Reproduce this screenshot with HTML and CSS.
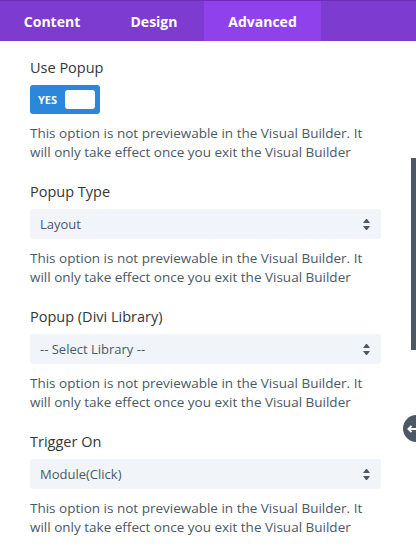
FILE: index.html
```html
<!DOCTYPE html>
<html lang="en">
<head>
    <meta charset="UTF-8">
    <title>Module Settings</title>
    <link rel="stylesheet" href="styles.css">
</head>
<body>
    <div class="tabs">
        <div class="tab">Content</div>
        <div class="tab">Design</div>
        <div class="tab active">Advanced</div>
    </div>

    <div class="panel">
        <div class="option">
            <div class="label">Use Popup</div>
            <div class="toggle">
                <span class="toggle-text">YES</span>
                <span class="knob"></span>
            </div>
            <p class="help">This option is not previewable in the Visual Builder. It will only take effect once you exit the Visual Builder</p>
        </div>

        <div class="option">
            <div class="label">Popup Type</div>
            <div class="select">
                <span>Layout</span>
                <span class="arrows"></span>
            </div>
            <p class="help">This option is not previewable in the Visual Builder. It will only take effect once you exit the Visual Builder</p>
        </div>

        <div class="option">
            <div class="label">Popup (Divi Library)</div>
            <div class="select">
                <span>-- Select Library --</span>
                <span class="arrows"></span>
            </div>
            <p class="help">This option is not previewable in the Visual Builder. It will only take effect once you exit the Visual Builder</p>
        </div>

        <div class="option">
            <div class="label">Trigger On</div>
            <div class="select">
                <span>Module(Click)</span>
                <span class="arrows"></span>
            </div>
            <p class="help">This option is not previewable in the Visual Builder. It will only take effect once you exit the Visual Builder</p>
        </div>
    </div>

    <div class="scrollbar"></div>
    <div class="collapse">
        <svg width="10" height="10" viewBox="0 0 10 10"><path d="M9 5H2M4.5 2L1.5 5l3 3" fill="none" stroke="#fff" stroke-width="2"/></svg>
    </div>
</body>
</html>
```

FILE: styles.css
```css
body {
    margin: 0;
    font-family: "Open Sans", sans-serif;
    background-color: #fff;
    overflow: hidden;
    height: 547px;
    position: relative;
}

.tabs {
    display: flex;
    height: 41px;
    background-color: #7e3bd0;
    border-top: 1px solid #6c2eb9;
    box-sizing: border-box;
}

.tab {
    display: flex;
    align-items: center;
    justify-content: center;
    color: #fff;
    font-weight: 700;
    font-size: 14px;
    padding: 0 26px;
}

.tab:first-child {
    width: 52px;
}

.tab:nth-child(2) {
    width: 48px;
}

.tab.active {
    width: 65px;
    background-color: #8f42ec;
}

.panel {
    padding: 17px 35px 0 30px;
}

.option {
    margin-bottom: 20px;
}

.label {
    font-size: 14.5px;
    line-height: 20px;
    color: #32373c;
    margin-bottom: 7px;
}

.toggle {
    display: flex;
    align-items: center;
    width: 70px;
    height: 29px;
    box-sizing: border-box;
    padding: 0 5px 0 8px;
    background-color: #2b87da;
    border-radius: 3px;
}

.toggle-text {
    color: #fff;
    font-size: 11px;
    font-weight: 700;
    flex: 1;
}

.knob {
    width: 30px;
    height: 19px;
    background-color: #fff;
    border-radius: 3px;
}

.help {
    margin: 10px 0 0;
    font-size: 13.5px;
    line-height: 19px;
    color: #4c5866;
}

.select {
    display: flex;
    align-items: center;
    justify-content: space-between;
    height: 30px;
    padding: 0 10px;
    background-color: #f1f5f9;
    border-radius: 3px;
    font-size: 13px;
    color: #4c5866;
}

.arrows {
    width: 7px;
    height: 11px;
    display: flex;
    flex-direction: column;
    justify-content: space-between;
    margin-right: 1px;
}

.arrows::before,
.arrows::after {
    content: "";
    border-left: 3.5px solid transparent;
    border-right: 3.5px solid transparent;
}

.arrows::before {
    border-bottom: 4px solid #4c5866;
}

.arrows::after {
    border-top: 4px solid #4c5866;
}

.scrollbar {
    position: absolute;
    right: 0;
    top: 158px;
    width: 5px;
    height: 192px;
    background-color: #4c5866;
}

.collapse {
    position: absolute;
    left: 403px;
    top: 415px;
    width: 27px;
    height: 27px;
    border-radius: 50%;
    background-color: #4c5866;
    display: flex;
    align-items: center;
    padding-left: 4px;
    box-sizing: border-box;
}
```
